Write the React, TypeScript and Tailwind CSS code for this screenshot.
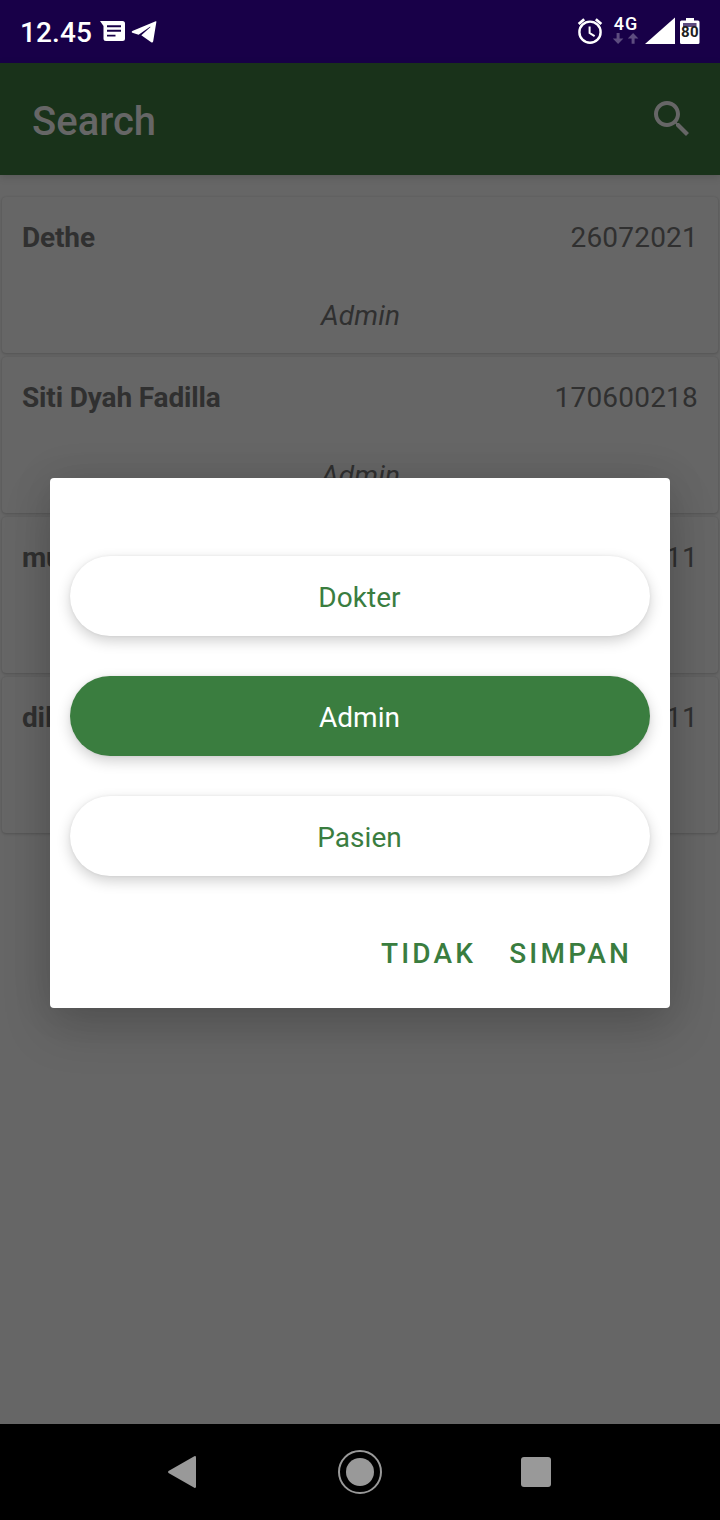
import React from 'react';

const users = [
  { name: 'Dethe', id: '26072021', role: 'Admin' },
  { name: 'Siti Dyah Fadilla', id: '170600218', role: 'Admin' },
  { name: 'muhammad', id: '111111111', role: 'Dokter' },
  { name: 'dilla', id: '111111111', role: 'Pasien' },
];

const roles = ['Dokter', 'Admin', 'Pasien'];

function StatusBar() {
  return (
    <header className="flex h-[63px] shrink-0 items-start justify-between bg-[#180048] text-white">
      <div className="flex pl-[20px]">
        <span className="mt-[15px] w-[80px] text-[28px] leading-[36px] font-medium tracking-[0.1px]">12.45</span>
        <svg className="h-[63px] w-[60px]" viewBox="100 0 60 63" fill="currentColor">
          <path fillRule="evenodd" d="M100 21H122.500Q125 21 125 23.500V38.500Q125 41 122.500 41H106Q103.500 41 103.500 38.500V26ZM107 25.300V27.300H121V25.300ZM107 29.800V31.800H121V29.800ZM107 34.700V36.500H115.500V34.700Z" />
          <path d="M156.400 21.800Q156.500 20.900 155.700 21.200L132.300 31Q130.800 31.900 132.300 32.800L138.600 34.800L150 26.800Q150.900 26.500 150.300 27.200L141.300 35.300L151.200 42.300Q152.700 43.200 153.200 41.300Z" />
        </svg>
      </div>
      <div className="flex">
        <svg className="h-[63px] w-[36px]" viewBox="574 0 36 63" fill="none" stroke="currentColor">
          <circle cx="590" cy="32.200" r="10.600" strokeWidth="2.400" />
          <path strokeWidth="2.800" d="M578.700 24 584.200 19.200M595.800 19.200 601.300 24" />
          <path strokeWidth="2" d="M589.600 26.500V33L594.600 36.200" />
        </svg>
        <div className="flex w-[32px] flex-col items-center">
          <span className="mt-[15px] h-[17px] text-[18px] leading-[18px] font-medium tracking-[1px]">4G</span>
          <svg className="h-[13px] w-[28px]" viewBox="612 32 28 13" fill="#5d4c7f">
            <path d="M616.600 33H619.600V38.500H623.400L618.100 44 612.800 38.500H616.600Z" />
            <path d="M631.600 43.800H634.600V38.500H638.400L633.100 33 627.800 38.500H631.600Z" />
          </svg>
        </div>
        <svg className="h-[63px] w-[36px]" viewBox="642 0 36 63" fill="currentColor">
          <path d="M675 17.500V44H645Z" />
        </svg>
        <div className="relative mt-[18px] mr-[20px] ml-[2px] h-[26px] w-[20px]">
          <svg className="h-[26px] w-[20px]" viewBox="0 0 20 26">
            <path fill="white" d="M6 0H14V2.500H18Q19.500 2.500 19.500 4V24.500Q19.500 26 18 26H1.500Q0 26 0 24.500V4Q0 2.500 1.500 2.500H6Z" />
            <path fill="#5d4c7f" d="M3 5H16.500V9H3Z" />
          </svg>
          <span className="absolute top-[7px] left-[1px] text-[15px] leading-[15px] font-bold tracking-[0.3px] text-[#202020]">80</span>
        </div>
      </div>
    </header>
  );
}

function NavigationBar() {
  return (
    <nav className="flex h-[96px] shrink-0 items-center bg-black pl-[166px]">
      <svg className="h-[36px] w-[32px]" viewBox="0 0 32 36" fill="#999">
        <path d="M28.300 2.200Q30 1.500 30 3.500V32.500Q30 34.500 28.300 33.800L2.500 19Q1.500 18 2.500 17Z" />
      </svg>
      <svg className="ml-[140px] h-[44px] w-[44px]" viewBox="0 0 44 44" fill="none">
        <circle cx="22" cy="22" r="21" stroke="#999" strokeWidth="2" />
        <circle cx="22" cy="22" r="14" fill="#999" />
      </svg>
      <div className="ml-[139px] h-[30px] w-[30px] rounded-[3px] bg-[#999]" />
    </nav>
  );
}

function RoleDialog() {
  return (
    <section className="absolute top-[478px] left-[50px] flex h-[530px] w-[620px] flex-col rounded-[4px] bg-white px-[20px] pt-[78px] shadow-[0_20px_48px_rgba(0,0,0,0.17),0_0_40px_rgba(0,0,0,0.1)]">
      <div className="flex flex-col gap-[40px]">
        {roles.map((role) => (
          <button
            key={role}
            className={
              role === 'Admin'
                ? 'h-[80px] rounded-full bg-[#3a7d3f] pt-[3px] pr-[1px] text-[28px] tracking-[0.05px] text-white shadow-[0_5px_14px_rgba(0,0,0,0.19),0_0_3px_rgba(0,0,0,0.07)]'
                : 'h-[80px] rounded-full bg-white pt-[3px] pr-[1px] text-[28px] tracking-[0.05px] text-[#3a7d3f] shadow-[0_5px_14px_rgba(0,0,0,0.19),0_0_3px_rgba(0,0,0,0.07)]'
            }
          >
            {role}
          </button>
        ))}
      </div>
      <div className="mt-[58px] flex justify-end gap-[33px] pr-[18px] text-[28px] leading-[40px] font-medium tracking-[3.2px] text-[#3a7d3f]">
        <button>TIDAK</button>
        <button>SIMPAN</button>
      </div>
    </section>
  );
}

export default function App() {
  return (
    <div className="relative flex h-[1520px] w-[720px] flex-col overflow-hidden bg-[#666] font-['Roboto',sans-serif]">
      <StatusBar />
      <div className="z-0 flex h-[112px] shrink-0 items-start justify-between bg-[#19321a] pr-[24px] pl-[32px] text-[#666] shadow-[0_2px_8px_rgba(0,0,0,0.15)]">
        <h1 className="mt-[35px] text-[40px] leading-[48px] font-medium">Search</h1>
        <svg className="mt-[32px] h-[48px] w-[48px]" viewBox="0 0 24 24" fill="currentColor">
          <path d="M15.500 14h-.79l-.28-.27C15.410 12.590 16 11.110 16 9.500 16 5.910 13.090 3 9.500 3S3 5.910 3 9.500 5.910 16 9.500 16c1.610 0 3.090-.59 4.230-1.570l.27.28v.79l5 4.990L20.490 19l-4.990-5zm-6 0C7.010 14 5 11.990 5 9.500S7.010 5 9.500 5 14 7.010 14 9.500 11.990 14 9.500 14z" />
        </svg>
      </div>
      <main className="flex flex-1 flex-col gap-[4px] px-[2px] pt-[22px]">
        {users.map((user) => (
          <article
            key={user.name}
            className="h-[156px] rounded-[4px] bg-[#666] px-[20px] pt-[22px] text-[28px] leading-[38px] text-[#303030] shadow-[0_1px_3px_rgba(0,0,0,0.17),0_0_2px_rgba(0,0,0,0.08)]"
          >
            <div className="flex justify-between">
              <span className="font-bold tracking-[-0.14px]">{user.name}</span>
              <span className="tracking-[0.2px]">{user.id}</span>
            </div>
            <p className="mt-[40px] pl-[1px] text-center tracking-[0.15px] italic">{user.role}</p>
          </article>
        ))}
      </main>
      <NavigationBar />
      <RoleDialog />
    </div>
  );
}
